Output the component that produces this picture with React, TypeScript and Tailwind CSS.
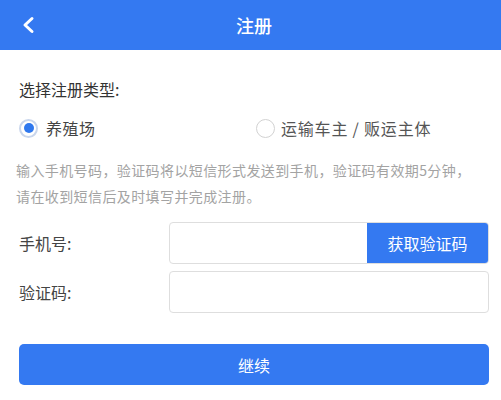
export default function App() {
  return (
    <div className="w-[501px] h-[400px] bg-white font-['Noto_Sans_CJK_SC','Noto_Sans',sans-serif] overflow-hidden">
      {/* header */}
      <div className="relative h-[50px] bg-[#3479f1] flex items-center justify-center">
        <button className="absolute left-[20px] top-[15px] w-[16px] h-[20px] flex items-center justify-center">
          <svg width="14" height="18" viewBox="0 0 14 18" fill="none">
            <path d="M11 2.5L4 9L11 15.5" stroke="white" strokeWidth="3" strokeLinecap="round" strokeLinejoin="round" />
          </svg>
        </button>
        <span className="text-white text-[18px] leading-none ml-[7px] font-medium">注册</span>
      </div>

      <div className="pl-[19px] pr-[12px]">
        <div className="pt-[27px] text-[16px] leading-[24px] text-[#333]">选择注册类型:</div>

        <div className="mt-[15px] grid grid-cols-2 h-[24px] items-center">
          <label className="flex items-center gap-[8px]">
            <span className="w-[19px] h-[19px] rounded-full border-[2px] border-[#c9d6ec] flex items-center justify-center">
              <span className="w-[10px] h-[10px] rounded-full bg-[#2f78ee]" />
            </span>
            <span className="text-[16px] text-[#444] tracking-[0.5px]">养殖场</span>
          </label>
          <label className="flex items-center gap-[6px] ml-[2px]">
            <span className="w-[19px] h-[19px] rounded-full border-[1.5px] border-[#d2d2d2]" />
            <span className="text-[16px] text-[#555] tracking-[0.8px]">运输车主 / 贩运主体</span>
          </label>
        </div>

        <p className="mt-[17px] text-[14px] leading-[26px] tracking-[0.4px] text-[#a3a3a3] -ml-[3px]">
          输入手机号码，验证码将以短信形式发送到手机，验证码有效期5分钟，
          <br />
          请在收到短信后及时填写并完成注册。
        </p>

        <div className="mt-[13px] flex flex-col gap-[7px]">
          <div className="flex items-center h-[42px]">
            <span className="w-[150px] shrink-0 text-[16px] text-[#444]">手机号:</span>
            <div className="flex-1 h-full flex border border-[#dedede] rounded-[4px] overflow-hidden">
              <input className="flex-1 min-w-0 outline-none px-3 text-[15px]" />
              <button className="w-[121px] h-full bg-[#3479f1] text-white text-[16px]">获取验证码</button>
            </div>
          </div>
          <div className="flex items-center h-[42px]">
            <span className="w-[150px] shrink-0 text-[16px] text-[#444]">验证码:</span>
            <div className="flex-1 h-full border border-[#dedede] rounded-[4px]">
              <input className="w-full h-full outline-none px-3 text-[15px] bg-transparent" />
            </div>
          </div>
        </div>

        <button className="mt-[31px] w-full h-[41px] rounded-[5px] bg-[#3479f1] text-white text-[16px]">继续</button>
      </div>
    </div>
  );
}
